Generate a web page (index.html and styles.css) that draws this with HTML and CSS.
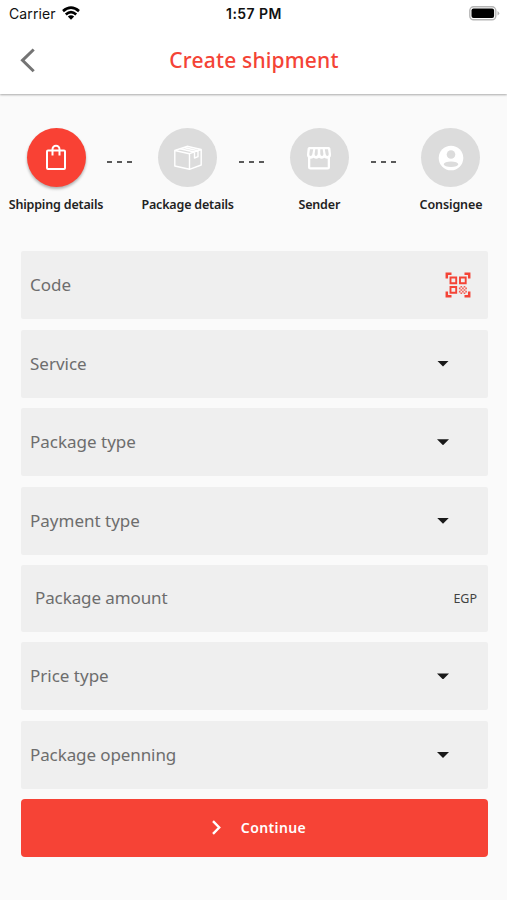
FILE: index.html
```html
<!DOCTYPE html>
<html lang="en">
<head>
<meta charset="utf-8">
<title>Create shipment</title>
<link rel="stylesheet" href="styles.css">
</head>
<body>
<header class="header">
  <div class="status">
    <div class="carrier"><span>Carrier</span>
      <svg class="wifi" width="18" height="14" viewBox="0 0 18 14"><g fill="none" stroke="#000" stroke-width="2.7"><path d="M1 5.100Q9-1.700 17 5.100M3.800 8.400Q9 3.900 14.200 8.400"/></g><path d="M5.800 10.400Q9 7.900 12.200 10.400L9 13.800Z"/></svg>
    </div>
    <span class="time">1:57 PM</span>
    <svg class="battery" width="31" height="15" viewBox="0 0 31 15"><rect x=".8" y=".8" width="26" height="13" rx="3.800" fill="#fff" stroke="#b5b5b5" stroke-width="1.400"/><rect x="2.500" y="2.500" width="22.600" height="9.600" rx="2"/><path d="M28.500 5Q32 7.300 28.500 9.600Z" fill="#b5b5b5"/></svg>
  </div>
  <nav class="nav">
    <svg class="back" width="16" height="25" viewBox="0 0 16 25"><path d="M13.700 1.500 2.500 12.300 13.700 23.200" fill="none" stroke="#747474" stroke-width="3"/></svg>
    <h1>Create shipment</h1>
  </nav>
</header>
<main>
  <section class="steps">
    <div class="step active">
      <div class="circle"><svg width="26" height="28" viewBox="0 0 26 28" fill="none" stroke="#fff" stroke-width="2"><rect x="4" y="6.500" width="18" height="18.500" rx="1"/><path d="M9.500 11.500V5.300a3.500 3.500 0 0 1 7 0v6.200"/></svg></div>
      <span class="label">Shipping details</span>
    </div>
    <i class="dashes"></i>
    <div class="step">
      <div class="circle"><svg width="30" height="28" viewBox="0 0 30 28" fill="none" stroke="#fff" stroke-width="1.400" stroke-linejoin="round"><path d="M1.800 6.500 14 2.300l14.200 3.200V21L16.500 25.300 1.800 22ZM1.800 6.500 16.500 9.700 28.200 5.500M16.500 9.700V25.300M7 4.800 21.500 8v6l3.500-1.300V6.700L10.600 3.500"/></svg></div>
      <span class="label">Package details</span>
    </div>
    <i class="dashes"></i>
    <div class="step">
      <div class="circle"><svg width="26" height="26" viewBox="0 0 26 26"><path fill="#fff" fill-rule="evenodd" d="M3.300 2h19.400q1.500 0 1.700 1.500L25 9.500q.2 2-1 3V22q0 2.500-2.500 2.500h-17Q2 24.500 2 22v-9.500Q.8 11.500 1 9.500L1.600 3.500Q1.800 2 3.300 2ZM4 4.200 3.300 9q-.2 2 1.300 2T6.300 9.200L7.200 4.200ZM9.300 4.200 8.600 9q0 2 1.400 2t1.700-2V4.200ZM14.300 4.200V9q.3 2 1.700 2t1.400-2L16.700 4.200ZM18.800 4.200l.9 5q.3 1.800 1.700 1.800t1.300-2L22 4.200ZM4.300 13.800v8.400h17.400v-8.400q-2 0-3.300-1-2.700 1.800-5.400 0-2.700 1.800-5.400 0-1.300 1-3.300 1Z"/></svg></div>
      <span class="label">Sender</span>
    </div>
    <i class="dashes"></i>
    <div class="step">
      <div class="circle"><svg width="26" height="26" viewBox="0 0 26 26"><circle cx="13" cy="13" r="12.300" fill="#fff"/><circle cx="13" cy="9.500" r="4.300" fill="#dcdcdc"/><ellipse cx="13" cy="19.200" rx="7.300" ry="2.800" fill="#dcdcdc"/></svg></div>
      <span class="label cons">Consignee</span>
    </div>
  </section>
  <form class="form">
    <div class="field"><span>Code</span>
      <svg class="qr" width="26" height="26" viewBox="0 0 26 26" fill="none" stroke="#f44336"><path stroke-width="2.500" d="M1.800 6.500V1.800h4.700M19.500 1.800h4.700v4.700M1.800 19.500v4.700h4.700M19.500 24.200h4.700v-4.700"/><path stroke-width="1.900" d="M5.500 5.500h5.700v5.700H5.500ZM15 5.500h5.700v5.700H15ZM5.500 15h5.700v5.700H5.500Z"/><path fill="#f44336" fill-opacity=".85" stroke="none" d="M15.500 14h1.600v1.600h-1.600ZM18.700 14h1.600v1.600h-1.600ZM13.900 15.600h1.600v1.600h-1.600ZM17.100 15.600h1.600v1.600h-1.600ZM20.300 15.600h1.600v1.600h-1.600ZM15.500 17.200h1.600v1.600h-1.600ZM18.700 17.200h1.600v1.600h-1.600ZM13.900 18.800h1.600v1.600h-1.600ZM17.100 18.800h1.600v1.600h-1.600ZM20.300 18.800h1.600v1.600h-1.600ZM15.500 20.400h1.600V22h-1.600ZM18.700 20.400h1.600V22h-1.600Z"/></svg></div>
    <div class="field"><span>Service</span><i class="caret"></i></div>
    <div class="field"><span>Package type</span><i class="caret"></i></div>
    <div class="field"><span>Payment type</span><i class="caret"></i></div>
    <div class="field amount"><span>Package amount</span><span class="currency">EGP</span></div>
    <div class="field"><span>Price type</span><i class="caret"></i></div>
    <div class="field last"><span>Package openning</span><i class="caret"></i></div>
    <button type="button" class="continue"><svg width="11" height="15" viewBox="0 0 11 15"><path d="M2 1.200 8.200 7.500 2 13.800" fill="none" stroke="#fff" stroke-width="2.400"/></svg><span>Continue</span></button>
  </form>
</main>
</body>
</html>
```
FILE: styles.css
```css
* { box-sizing: border-box; }
body { margin: 0; height: 900px; overflow: hidden; background: #fafafa; font-family: "Noto Sans", sans-serif; color: #222; }
svg { display: block; flex: none; }
.header { height: 94px; background: #fff; box-shadow: 0 1px 2px rgba(0,0,0,.32); }
.status { height: 28px; display: grid; grid-template-columns: 1fr auto 1fr; align-items: center; padding: 0 7px 0 9px; font-family: Inter, sans-serif; font-size: 14px; color: #111; }
.carrier { display: flex; align-items: center; gap: 6px; letter-spacing: .1px; margin-top: -1px; }
.wifi { margin-top: -2px; }
.time { font-weight: 600; font-size: 14px; letter-spacing: .45px; margin: -2px 0 0 -1px; }
.battery { justify-self: end; margin-top: -2px; }
.nav { height: 66px; display: grid; grid-template-columns: 40px 1fr 40px; align-items: center; padding: 0 20px; }
.back { margin-top: -2px; }
h1 { margin: -3px 0 0 1px; text-align: center; font-size: 21px; font-weight: 500; letter-spacing: .18px; color: #f44336; white-space: nowrap; line-height: 28px; }
.steps { display: flex; justify-content: space-between; padding: 34px 0 0; height: 157px; }
.step { width: 112px; display: flex; flex-direction: column; align-items: center; }
.circle { width: 59px; height: 59px; border-radius: 50%; background: #dcdcdc; display: grid; place-items: center; flex: none; }
.active .circle { background: #f94134; box-shadow: 0 2px 3px rgba(0,0,0,.3); }
.label { margin-top: 8px; font-size: 12.500px; line-height: 19px; font-weight: 600; letter-spacing: -.18px; white-space: nowrap; }
.cons { letter-spacing: -.1px; }
.dashes { width: 25px; height: 2px; margin: 33px -1px 0 -5px; background: repeating-linear-gradient(90deg, #5a5a5a 0 5px, transparent 5px 10px); }
.form { display: flex; flex-direction: column; padding: 0 19px 0 21px; gap: 10.600px; }
.field { height: 68px; padding: 0 17px 0 9px; background: #efefef; border-radius: 2px; display: flex; align-items: center; justify-content: space-between; font-size: 17px; color: #6d6d6d; }
.field span { white-space: nowrap; padding-bottom: 1px; }
.amount { height: 66.500px; padding: 0 11px 0 14px; }
.amount span:first-child { letter-spacing: -.1px; padding-bottom: 2px; }
.last span { letter-spacing: -.1px; }
.field .currency { font-size: 12.500px; color: #424242; padding: 0; }
.caret { width: 12px; height: 6px; margin-right: 22px; background: #191919; clip-path: polygon(0 0, 100% 0, 50% 100%); }
.continue { height: 58px; margin-top: -1px; padding: 0 0 0 8px; border: 0; border-radius: 4px; background: #f64336; color: #fff; display: flex; align-items: center; justify-content: center; gap: 19px; font: 600 14px "Noto Sans", sans-serif; letter-spacing: .4px; }
```
